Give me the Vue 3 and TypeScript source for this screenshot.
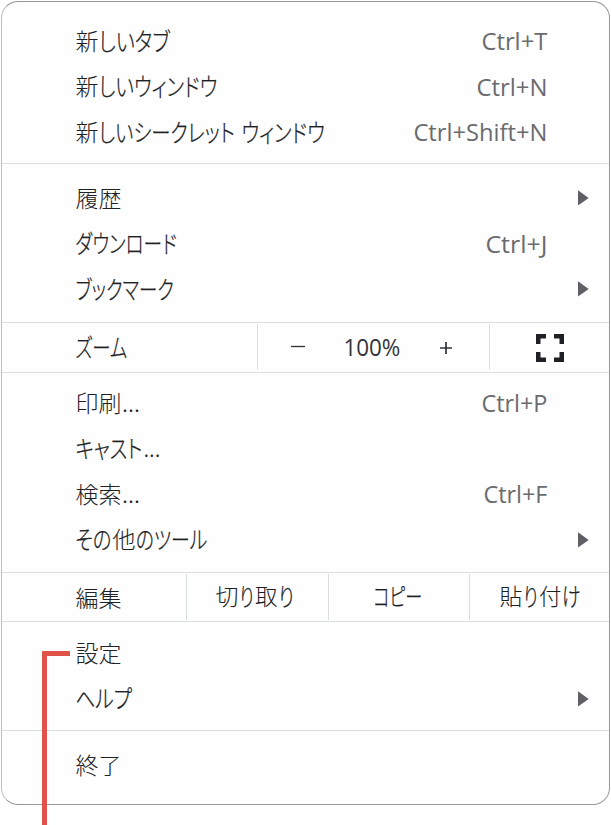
<script setup lang="ts">
import { h } from 'vue'

// A run is [text, start, width] measured from the left edge of its label.
type Run = [string, number, number]
interface Item {
  label: Run[]
  keys?: Run
  submenu?: boolean
}

const isKana = (text: string) => /^[\u3040-\u30ff]/.test(text)

const FittedText = (props: { runs: Run[]; width: number }) =>
  h('svg', { width: props.width, height: 44, class: 'fitted' }, [
    h(
      'text',
      props.runs.map(([text, x, length]) =>
        h(
          'tspan',
          {
            x: isKana(text) ? x + 0.3 : x + 0.4,
            y: isKana(text) ? 31 : 29.9,
            'font-size': isKana(text) ? 24.5 : undefined,
            'stroke-width': isKana(text) ? 0.25 : 0,
            textLength: length,
            lengthAdjust: 'spacingAndGlyphs',
          },
          text,
        ),
      ),
    ),
  ])
FittedText.props = ['runs', 'width']

const windows: Item[] = [
  { label: [['新', 0, 23], ['しいタブ', 23.5, 71]], keys: ['Ctrl+T', 0, 66] },
  { label: [['新', 0, 23], ['しいウィンドウ', 23.5, 118.5]], keys: ['Ctrl+N', 0, 71] },
  { label: [['新', 0, 23], ['しいシークレット', 23.5, 136], ['ウィンドウ', 166, 83.5]], keys: ['Ctrl+Shift+N', 0, 134] },
]
const browsing: Item[] = [
  { label: [['履歴', 0, 46]], submenu: true },
  { label: [['ダウンロード', 0, 101.5]], keys: ['Ctrl+J', 0, 62] },
  { label: [['ブックマーク', 0, 98.5]], submenu: true },
]
const tools: Item[] = [
  { label: [['印刷', 0, 46], ['...', 46.5, 18]], keys: ['Ctrl+P', 0, 66] },
  { label: [['キャスト', 0, 67], ['...', 68, 17]] },
  { label: [['検索', 0, 46], ['...', 46.5, 18]], keys: ['Ctrl+F', 0, 64] },
  { label: [['その', 0, 36], ['他', 37, 23], ['のツール', 60.5, 71.5]], submenu: true },
]
const support: Item[] = [
  { label: [['設定', 0, 46]] },
  { label: [['ヘルプ', 0, 56.5]], submenu: true },
]
const exit: Item[] = [{ label: [['終了', 0, 46]] }]

const sections = [
  { kind: 'group', name: 'windows', items: windows },
  { kind: 'group', name: 'browsing', items: browsing },
  { kind: 'zoom', name: 'zoom', items: [] as Item[] },
  { kind: 'group', name: 'tools', items: tools },
  { kind: 'edit', name: 'edit', items: [] as Item[] },
  { kind: 'group', name: 'support', items: support },
  { kind: 'group', name: 'exit', items: exit },
]
</script>

<template>
  <main class="page">
    <div class="menu">
      <section v-for="s in sections" :key="s.name" class="section" :class="s.name">
        <template v-if="s.kind === 'group'">
          <div v-for="(item, i) in s.items" :key="i" class="row">
            <FittedText class="label" :runs="item.label" :width="270" />
            <FittedText v-if="item.keys" class="keys" :runs="[item.keys]" :width="item.keys[2]" />
            <svg v-if="item.submenu" class="arrow" width="11" height="16" viewBox="0 0 11 16">
              <path d="M0 0.3 10.7 8 0 15.5z" />
            </svg>
          </div>
        </template>
        <template v-else-if="s.kind === 'zoom'">
          <div class="title"><FittedText class="label" :runs="[['ズーム', 0, 52]]" :width="60" /></div>
          <div class="controls">
            <svg class="sign" width="15" height="15"><path d="M0 6.5H14" /></svg>
            <FittedText class="percent" :runs="[['100%', 0, 57]]" :width="60" />
            <svg class="sign plus" width="13" height="15"><path d="M0 8H12M6 2V14" /></svg>
          </div>
          <div class="full">
            <svg width="28" height="28" viewBox="0 0 28 28">
              <path d="M0 0H10V4.5H4.5V10H0zM18 0H28V10H23.5V4.5H18zM0 18H4.5V23.5H10V28H0zM23.5 18H28V28H18V23.5H23.5z" />
            </svg>
          </div>
        </template>
        <template v-else>
          <div class="title"><FittedText class="label" :runs="[['編集', 0, 46]]" :width="60" /></div>
          <div class="action cut"><FittedText class="label" :runs="[['切', 0, 23], ['り', 24, 14.5], ['取', 39.5, 22.5], ['り', 63, 15.5]]" :width="80" /></div>
          <div class="action copy"><FittedText class="label" :runs="[['コピー', 0, 49]]" :width="50" /></div>
          <div class="action paste"><FittedText class="label" :runs="[['貼', 0, 23], ['り', 24, 14.5], ['付', 39.5, 22.5], ['け', 62.5, 18.5]]" :width="82" /></div>
        </template>
      </section>
    </div>
    <div class="callout"></div>
  </main>
</template>

<style>
body {
  background: #fff;
}
</style>

<style scoped>
.page {
  position: relative;
  box-sizing: border-box;
  height: 825px;
  padding: 1px;
  overflow: hidden;
  font-family: "Noto Sans CJK JP", sans-serif;
  font-size: 23px;
  font-weight: 300;
  color: #202124;
}
.menu {
  box-sizing: border-box;
  width: 609px;
  height: 804px;
  border: 1px solid #999;
  border-left-color: #bbbdbf;
  border-radius: 17px;
  background: #fefefe;
}
.section {
  box-sizing: border-box;
  border-bottom: 1px solid #dadfe1;
}
.windows { height: 162px; padding-top: 17px; }
.browsing { height: 159px; padding-top: 12px; }
.zoom { height: 50px; }
.tools { height: 200px; padding-top: 8px; }
.edit { height: 49px; }
.support { height: 109px; padding-top: 9px; }
.exit { height: 72px; padding-top: 12px; border-bottom: 0; }
.row {
  display: flex;
  align-items: center;
  height: 45.5px;
  padding: 0 20px 0 73px;
}
.fitted {
  display: block;
  flex: none;
  overflow: visible;
  fill: currentColor;
  stroke: currentColor;
}
.label {
  font-feature-settings: "palt";
}
.keys {
  margin: 1px 42.4px 0 auto;
  font-family: "Open Sans", sans-serif;
  font-size: 23.5px;
  font-weight: 400;
  color: #6a6b6f;
}
.arrow {
  margin-left: auto;
  margin-top: -1px;
  fill: #5f6066;
}
.zoom, .edit {
  display: flex;
}
.title {
  box-sizing: border-box;
  padding-left: 73px;
}
.zoom .title { width: 255px; padding-top: 3px; }
.edit .title { width: 184px; padding-top: 4px; }
.controls {
  display: flex;
  align-items: center;
  box-sizing: border-box;
  width: 233px;
  height: 46px;
  margin-top: 1px;
  padding-left: 33px;
  border-left: 1px solid #dadfe1;
  border-right: 1px solid #dadfe1;
}
.sign {
  fill: none;
  stroke: #303238;
  stroke-width: 1.3;
}
.percent {
  margin: 1px 0 0 37px;
  font-family: "Open Sans", sans-serif;
  font-size: 23.5px;
  font-weight: 400;
  color: #333438;
}
.plus {
  margin-left: 37px;
  stroke-width: 1.7;
}
.full {
  padding: 11px 0 0 46px;
  fill: #202124;
}
.action {
  box-sizing: border-box;
  height: 46px;
  margin-top: 1px;
  padding-top: 1px;
  border-left: 1px solid #dadfe1;
}
.cut { width: 142px; padding-left: 28px; }
.copy { width: 141px; padding-left: 44px; }
.paste { padding-left: 28.5px; }
.callout {
  position: absolute;
  left: 42px;
  top: 651px;
  box-sizing: border-box;
  width: 28px;
  height: 174px;
  border-left: 5px solid #df534b;
  border-top: 5px solid #df534b;
}
</style>
